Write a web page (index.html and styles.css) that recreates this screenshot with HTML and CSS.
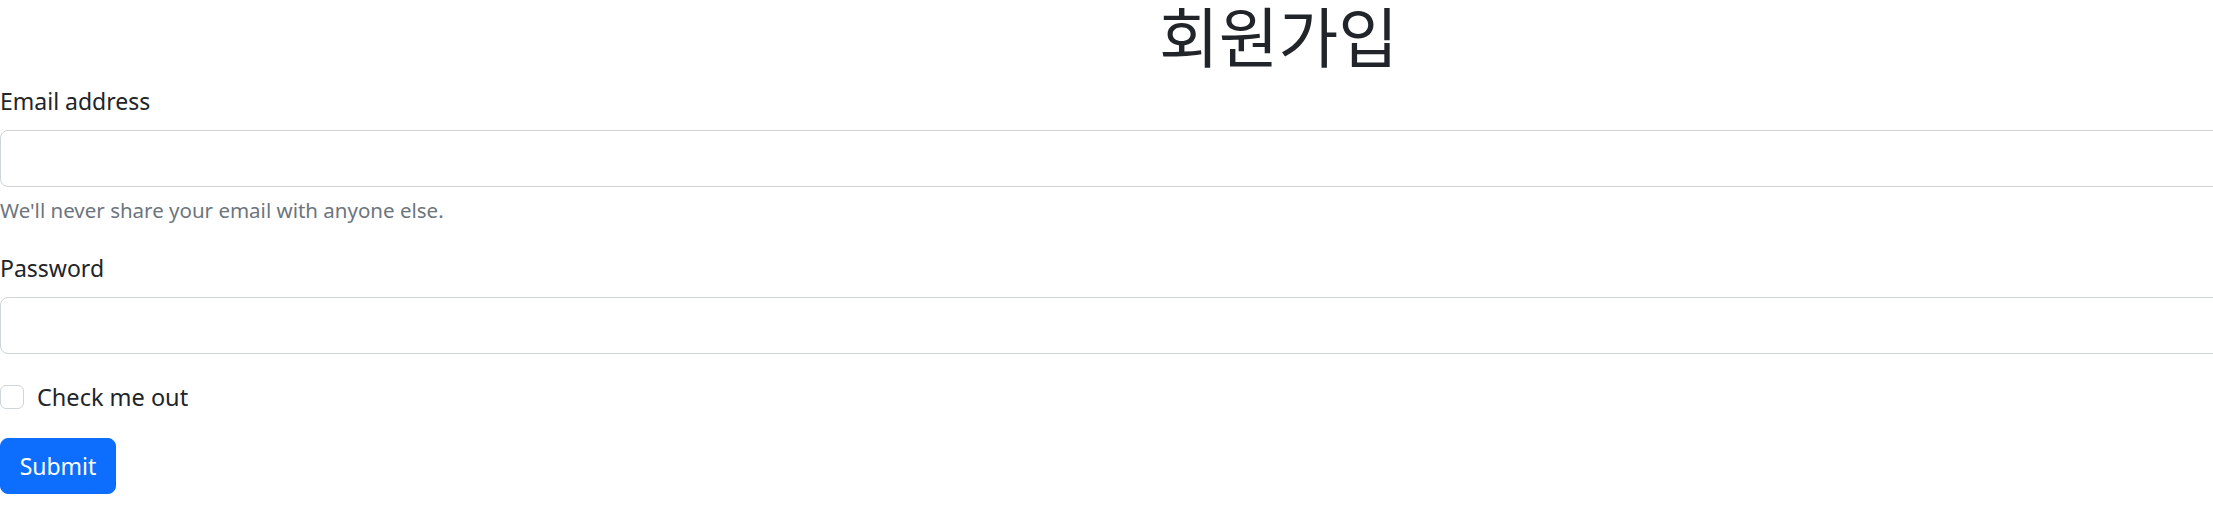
FILE: index.html
```html
<!DOCTYPE html>
<html lang="ko">
<head>
<meta charset="utf-8">
<title>회원가입</title>
<link rel="stylesheet" href="styles.css">
</head>
<body>
<div class="page">
  <h1 class="title">회원가입</h1>
  <form class="form">
    <div class="group">
      <label class="label" for="email">Email address</label>
      <input class="control" type="email" id="email">
      <div class="help">We'll never share your email with anyone else.</div>
    </div>
    <div class="group group-pw">
      <label class="label" for="pw">Password</label>
      <input class="control" type="password" id="pw">
    </div>
    <div class="check">
      <span class="box"></span>
      <label class="check-label">Check me out</label>
    </div>
    <button class="btn" type="button">Submit</button>
  </form>
</div>
</body>
</html>
```

FILE: styles.css
```css
html, body {
  margin: 0;
  padding: 0;
  overflow: hidden;
  background: #fff;
}
body {
  font-family: "Noto Sans", "Noto Sans CJK KR", sans-serif;
  color: #212529;
}
.page {
  width: 2213px;
}
.title {
  box-sizing: border-box;
  margin: 0;
  padding-left: 344px;
  height: 68px;
  font-family: "Noto Sans CJK KR", sans-serif;
  font-weight: 400;
  font-size: 65px;
  line-height: 68px;
  text-align: center;
  color: #212529;
}
.form {
  display: flex;
  flex-direction: column;
  align-items: flex-start;
  margin-top: 16px;
}
.group {
  display: flex;
  flex-direction: column;
  align-items: flex-start;
}
.group-pw {
  margin-top: 26px;
}
.label {
  font-size: 23px;
  line-height: 34px;
  height: 34px;
  margin-bottom: 12px;
}
.control {
  box-sizing: border-box;
  height: 57px;
  width: 2556px;
  margin: 0;
  border: 1px solid #ced4da;
  border-radius: 8px;
  background: #fff;
}
.help {
  margin-top: 8px;
  font-size: 20.5px;
  line-height: 30px;
  color: #6c757d;
}
.check {
  display: flex;
  align-items: center;
  gap: 13px;
  height: 34px;
  margin-top: 26px;
}
.box {
  box-sizing: border-box;
  width: 24px;
  height: 24px;
  border: 1px solid #ced4da;
  border-radius: 6px;
  background: #fff;
}
.check-label {
  font-size: 23.5px;
  line-height: 34px;
}
.btn {
  margin-top: 24px;
  box-sizing: border-box;
  height: 56px;
  width: 116px;
  border: 1px solid #0d6efd;
  border-radius: 8px;
  background: #0d6efd;
  color: #fff;
  font-family: "Noto Sans", sans-serif;
  font-size: 23px;
  padding: 0;
}
```
